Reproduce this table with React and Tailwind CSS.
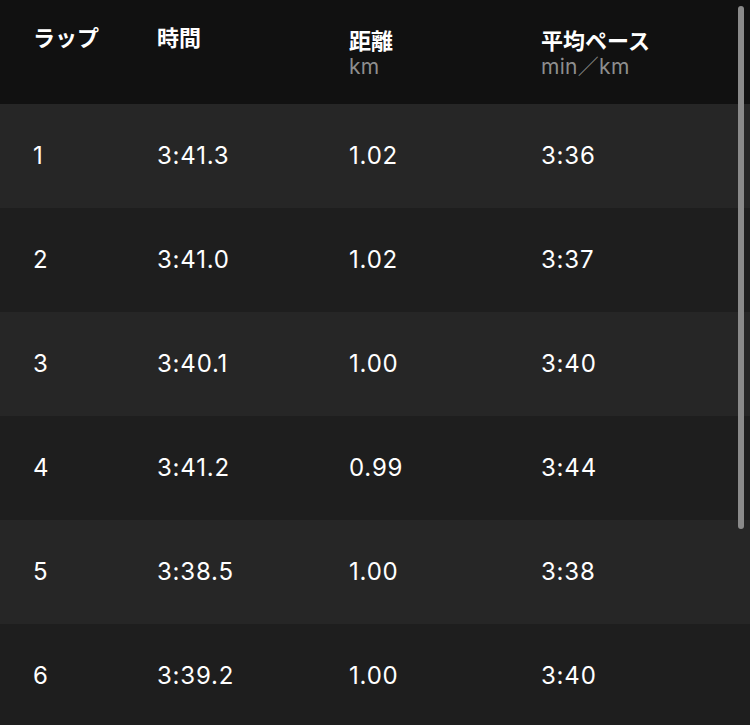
const laps = [
  { n: 1, time: "3:41.3", dist: "1.02", pace: "3:36" },
  { n: 2, time: "3:41.0", dist: "1.02", pace: "3:37" },
  { n: 3, time: "3:40.1", dist: "1.00", pace: "3:40" },
  { n: 4, time: "3:41.2", dist: "0.99", pace: "3:44" },
  { n: 5, time: "3:38.5", dist: "1.00", pace: "3:38" },
  { n: 6, time: "3:39.2", dist: "1.00", pace: "3:40" },
];

const cols = "grid grid-cols-[124px_192px_192px_1fr] pl-[33px]";

export default function App() {
  return (
    <div className="relative h-[725px] w-[750px] overflow-hidden bg-[#1e1e1e] font-['Inter','Noto_Sans_CJK_JP',sans-serif] text-white">
      <div className={`${cols} h-[104px] bg-[#111111] pt-[21px] font-['Noto_Sans_CJK_JP',sans-serif] text-[22px] font-bold leading-[30px]`}>
        <div>ラップ</div>
        <div>時間</div>
        <div className="pt-[3px]">
          <div>距離</div>
          <div className="font-['Inter',sans-serif] text-[21px] font-normal leading-[25px] tracking-[0.3px] text-[#8e8e8e]">km</div>
        </div>
        <div className="pt-[3px]">
          <div>平均ペース</div>
          <div className="font-['Inter','Noto_Sans_CJK_JP',sans-serif] text-[21px] font-normal leading-[25px] tracking-[0.3px] text-[#8e8e8e]">min／km</div>
        </div>
      </div>
      {laps.map((l, i) => (
        <div
          key={l.n}
          className={`${cols} h-[104px] items-center text-[24px] tracking-[0.8px] ${i % 2 === 0 ? "bg-[#262626]" : "bg-[#1e1e1e]"}`}
        >
          <div>{l.n}</div>
          <div>{l.time}</div>
          <div>{l.dist}</div>
          <div>{l.pace}</div>
        </div>
      ))}
      <div className="absolute right-[6px] top-[6px] h-[523px] w-[6px] rounded-full bg-[#8a8a8a]" />
    </div>
  );
}
